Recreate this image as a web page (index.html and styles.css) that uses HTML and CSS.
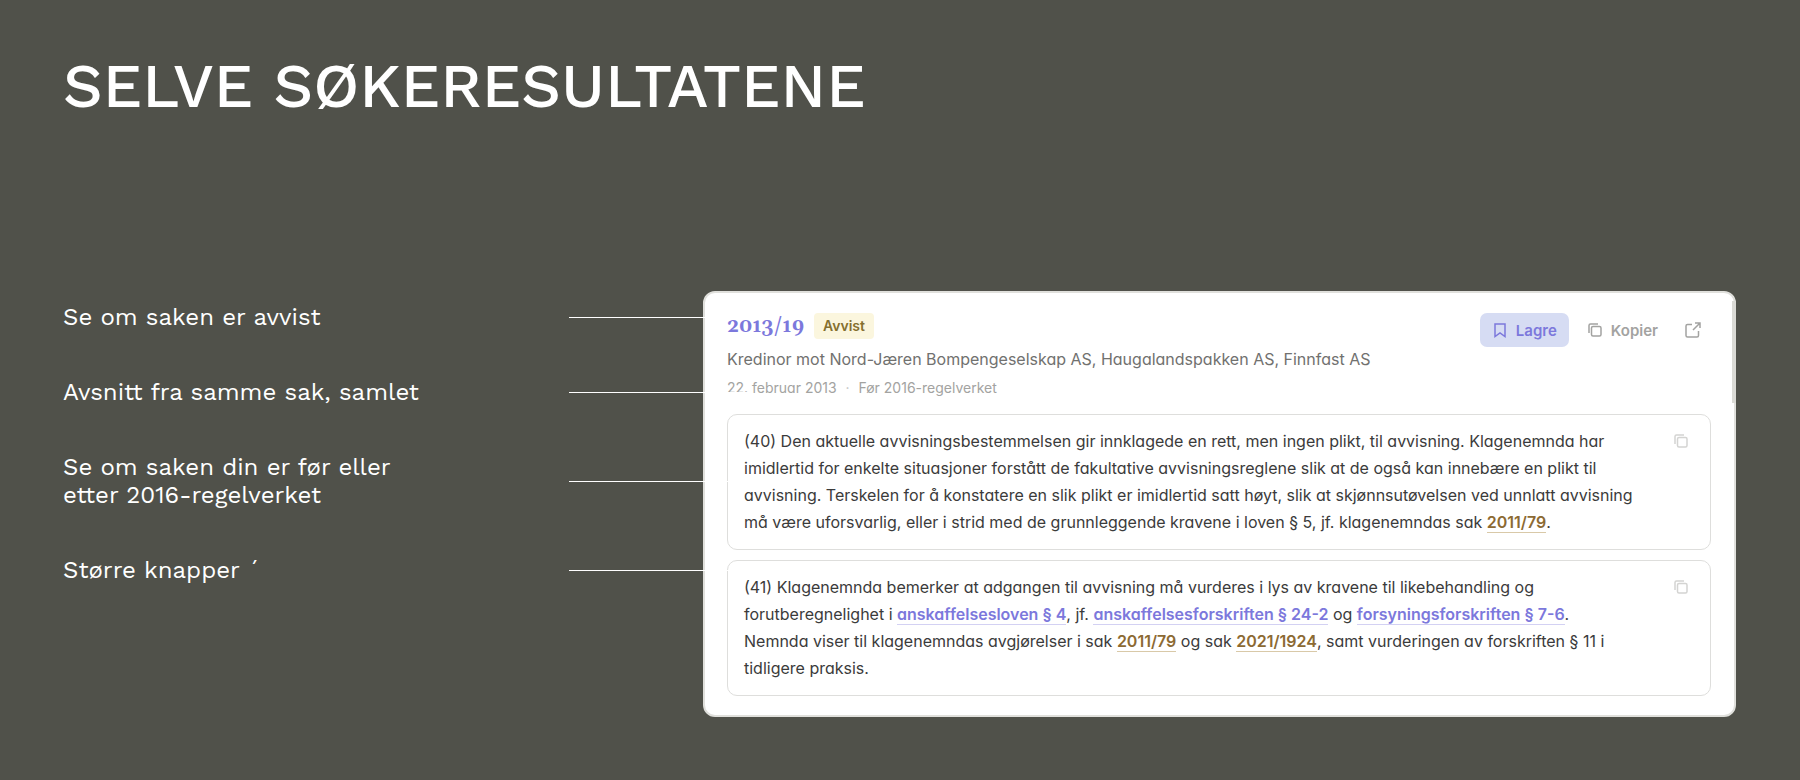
FILE: index.html
```html
<!DOCTYPE html>
<html lang="no">
<head>
  <meta charset="UTF-8" />
  <title>Selve søkeresultatene</title>
  <link rel="stylesheet" href="styles.css">
</head>
<body>
  <h1>SELVE SØKERESULTATENE</h1>

  <div class="content">
    <!-- Notes with pointer lines -->
    <ul class="notes">
      <li><span class="note">Se om saken er avvist</span><span class="line"></span></li>
      <li><span class="note">Avsnitt fra samme sak, samlet</span><span class="line"></span></li>
      <li><span class="note">Se om saken din er før eller<br>etter 2016-regelverket</span><span class="line"></span></li>
      <li><span class="note">Større knapper ´</span><span class="line"></span></li>
    </ul>

    <!-- Search result -->
    <article class="card">
      <header class="card-header">
        <div class="case">
          <div class="case-top">
            <a class="case-number" href="#">2013/19</a>
            <span class="badge">Avvist</span>
          </div>
          <p class="parties">Kredinor mot Nord-Jæren Bompengeselskap AS, Haugalandspakken AS, Finnfast AS</p>
          <p class="meta">22. februar 2013 <span class="dot">·</span> Før 2016-regelverket</p>
        </div>
        <div class="actions">
          <button class="btn btn-save" type="button">
            <svg width="16" height="16" viewBox="0 0 16 16"><path d="M3 2h10v12.500l-5-3.500-5 3.500z" /></svg>
            Lagre
          </button>
          <button class="btn" type="button">
            <svg width="16" height="16" viewBox="0 0 16 16"><rect x="4.500" y="4.500" width="9.500" height="9.500" rx="1.500" /><path d="M2 11V3.500A1.500 1.500 0 0 1 3.500 2H11" /></svg>
            Kopier
          </button>
          <a class="btn btn-open" href="#" aria-label="Åpne">
            <svg width="18" height="18" viewBox="0 0 18 18"><path d="M8 3.500H3.500A1.500 1.500 0 0 0 2 5v9.500A1.500 1.500 0 0 0 3.500 16H13a1.500 1.500 0 0 0 1.500-1.500V10M11 2h5v5M16 2L9 9" /></svg>
          </a>
        </div>
      </header>

      <section class="paragraph">
        <p>(40) Den aktuelle avvisningsbestemmelsen gir innklagede en rett, men ingen plikt, til avvisning. Klagenemnda har imidlertid for enkelte situasjoner forstått de fakultative avvisningsreglene slik at de også kan innebære en plikt til avvisning. Terskelen for å konstatere en slik plikt er imidlertid satt høyt, slik at skjønnsutøvelsen ved unnlatt avvisning må være uforsvarlig, eller i strid med de grunnleggende kravene i loven § 5, jf. klagenemndas sak <a class="ref" href="#">2011/79</a>.</p>
        <button class="copy" type="button" aria-label="Kopier avsnitt">
          <svg width="16" height="16" viewBox="0 0 16 16"><rect x="4.500" y="4.500" width="9.500" height="9.500" rx="1.500" /><path d="M2 11V3.500A1.500 1.500 0 0 1 3.500 2H11" /></svg>
        </button>
      </section>

      <section class="paragraph">
        <p>(41) Klagenemnda bemerker at adgangen til avvisning må vurderes i lys av kravene til likebehandling og forutberegnelighet i <a class="law" href="#">anskaffelsesloven § 4</a>, jf. <a class="law" href="#">anskaffelsesforskriften § 24-2</a> og <a class="law" href="#">forsyningsforskriften § 7-6</a>.<br>Nemnda viser til klagenemndas avgjørelser i sak <a class="ref" href="#">2011/79</a> og sak <a class="ref" href="#">2021/1924</a>, samt vurderingen av forskriften § 11 i tidligere praksis.</p>
        <button class="copy" type="button" aria-label="Kopier avsnitt">
          <svg width="16" height="16" viewBox="0 0 16 16"><rect x="4.500" y="4.500" width="9.500" height="9.500" rx="1.500" /><path d="M2 11V3.500A1.500 1.500 0 0 1 3.500 2H11" /></svg>
        </button>
      </section>
    </article>
  </div>
</body>
</html>
```

FILE: styles.css
```css
* {
  box-sizing: border-box;
}

body {
  margin: 0;
  padding: 50px 64px 64px 63px;
  background-color: #50514a;
  color: white;
  font-family: "Work Sans", Inter, sans-serif;
}

h1 {
  margin: 0 0 169px;
  font-size: 62px;
  line-height: 72px;
  font-weight: 500;
}

.content {
  display: grid;
  grid-template-columns: 640px 1fr;
  align-items: start;
}

.notes {
  list-style: none;
  margin: 0;
  padding: 12px 0 0;
  display: flex;
  flex-direction: column;
  gap: 47px;
  font-size: 24px;
  line-height: 28px;
  z-index: 1;
}

.notes li {
  display: flex;
  align-items: center;
}

.note {
  width: 506px;
}

/* runs a little way in over the card */
.line {
  flex: 1;
  height: 1px;
  margin-right: -46px;
  background-color: white;
}

.card {
  position: relative;
  display: flex;
  flex-direction: column;
  gap: 10px;
  padding: 20px 23px 19px 22px;
  background-color: white;
  border: 2px solid #e0e0dc;
  border-radius: 12px;
  font-family: Inter, sans-serif;
  font-feature-settings: "cv11";
}

/* scrollbar thumb on the card edge */
.card::after {
  content: "";
  position: absolute;
  top: 8px;
  right: -2px;
  width: 4px;
  height: 102px;
  background-color: #dadad5;
}

.card-header {
  display: flex;
  justify-content: space-between;
  align-items: flex-start;
  margin-bottom: 2px;
}

.case-top {
  display: flex;
  align-items: center;
  gap: 10px;
}

.case-number {
  color: #7c78dc;
  font-family: Georgia, Gelasio, "Liberation Serif", serif;
  font-size: 19px;
  line-height: 26px;
  font-weight: bold;
  font-variant-numeric: oldstyle-nums;
  text-decoration: none;
}

.badge {
  padding: 0 9px;
  background-color: #fbf6de;
  border-radius: 4px;
  color: #85702f;
  font-size: 14px;
  line-height: 26px;
  font-weight: 600;
}

.parties {
  margin: 6px 0 0;
  color: #71716f;
  font-size: 16px;
  line-height: 28px;
}

.meta {
  margin: 1px 0 0;
  color: #a3a3a1;
  font-size: 14px;
  line-height: 28px;
}

.dot {
  margin: 0 5px;
  color: #c4c4c2;
}

.actions {
  display: flex;
  gap: 6px;
  font-feature-settings: normal;
}

.btn {
  display: flex;
  align-items: center;
  gap: 8px;
  height: 34px;
  padding: 0 12px;
  border: none;
  border-radius: 7px;
  background: none;
  color: #a3a3a1;
  font-family: Inter, sans-serif;
  font-size: 15px;
  font-weight: 600;
  cursor: pointer;
}

.btn-save {
  background-color: #d6dcf3;
  color: #7c78dc;
}

.btn-open {
  padding: 0 9px 0 8px;
}

svg {
  fill: none;
  stroke: currentColor;
  stroke-width: 1.5;
}

.paragraph {
  display: flex;
  justify-content: space-between;
  align-items: flex-start;
  padding: 13px 16px;
  border: 1px solid #dededc;
  border-radius: 10px;
}

.paragraph p {
  width: 912px;
  margin: 0;
  color: #3b3b3b;
  font-size: 16px;
  line-height: 27px;
}

.copy {
  display: flex;
  margin: 5px 5px 0 0;
  padding: 0;
  border: none;
  background: none;
  color: #d4d4d2;
  cursor: pointer;
}

.law,
.ref {
  color: #7c78dc;
  border-bottom: 1px solid #d3d1f3;
  font-weight: 600;
  text-decoration: none;
}

.ref {
  color: #8c6a33;
  border-color: #d9c9a8;
}
```
